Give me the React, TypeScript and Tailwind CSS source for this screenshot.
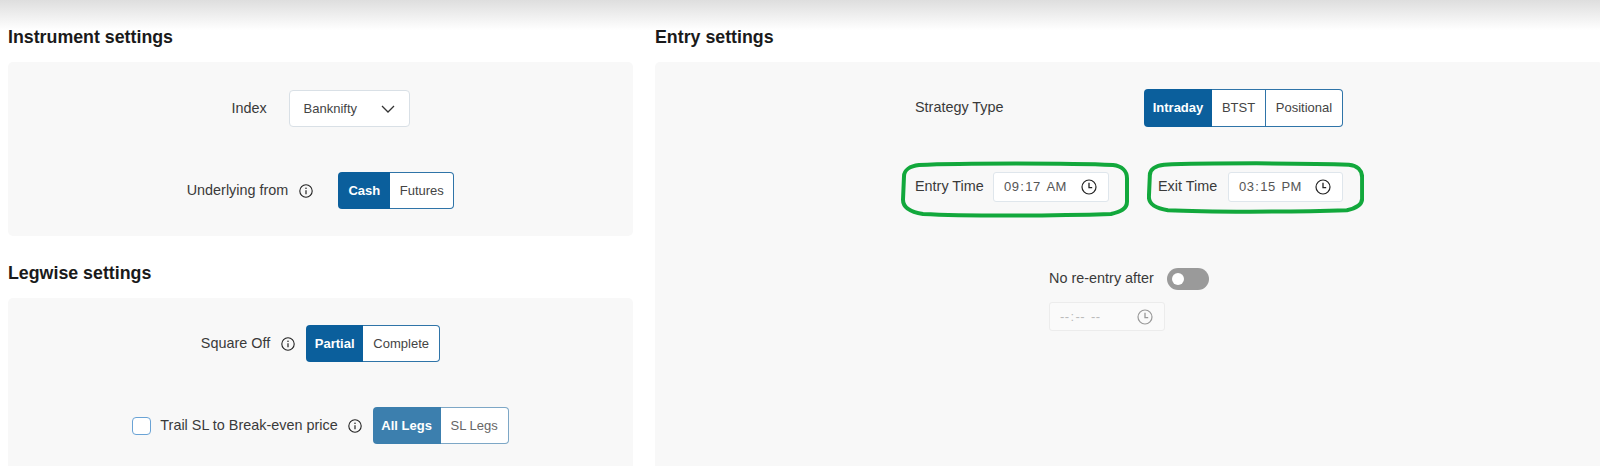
import React from "react";

const font = { fontFamily: '"Liberation Sans", Arial, sans-serif' };

function Info() {
  return (
    <svg width="14" height="14" viewBox="0 0 14 14" fill="none" className="shrink-0 text-[#222]">
      <circle cx="7" cy="7" r="6.2" stroke="currentColor" strokeWidth="1.1" />
      <path d="M7 6.2v4" stroke="currentColor" strokeWidth="1.2" />
      <circle cx="7" cy="4.2" r="0.8" fill="currentColor" />
    </svg>
  );
}

function Clock({ muted }: { muted?: boolean }) {
  return (
    <svg width="16" height="16" viewBox="0 0 16 16" fill="none" className={muted ? "text-[#999]" : "text-[#222]"}>
      <circle cx="8" cy="8" r="7" stroke="currentColor" strokeWidth="1.2" />
      <path d="M8 3.8V8.6h3.2" stroke="currentColor" strokeWidth="1.3" />
    </svg>
  );
}

type Opt = { label: string; w: string };

function Toggle({ options, light, h = "h-[37px]" }: { options: Opt[]; light?: boolean; h?: string }) {
  return (
    <div className={`flex ${h} shrink-0`}>
      {options.map((o, i) => {
        const active = i === 0;
        const last = i === options.length - 1;
        return (
          <div
            key={o.label}
            className={`flex items-center justify-center text-[13px] ${o.w} ${
              active
                ? light
                  ? "bg-[#3c7fae] font-bold text-white rounded-l-[4px]"
                  : "bg-[#0b5f9c] font-bold text-white rounded-l-[4px]"
                : light
                  ? "bg-white text-[#666] border border-l-0 border-[#7da7c6]"
                  : "bg-white text-[#444] border border-l-0 border-[#2f74a8]"
            } ${last ? "rounded-r-[4px]" : ""}`}
          >
            {o.label}
          </div>
        );
      })}
    </div>
  );
}

function TimeInput({ value, w, muted }: { value: [string, string, string]; w: string; muted?: boolean }) {
  return (
    <div
      className={`flex items-center justify-between pl-[10px] pr-[11px] ${w} ${muted ? "h-[29px] border-[#ececec] bg-[#fafafa] text-[#bbb]" : "h-[30px] border-[#dfe6ec] bg-white text-[#555]"} rounded-[3px] border`}
    >
      <span className="flex text-[13px] tracking-[0.4px]">
        <span>{value[0]}</span>
        <span className="mx-[1px]">:</span>
        <span>{value[1]}</span>
        <span className="ml-[6px]">{value[2]}</span>
      </span>
      <Clock muted={muted} />
    </div>
  );
}

function Ring({ className, path }: { className: string; path: string }) {
  return (
    <svg className={`pointer-events-none absolute ${className}`} viewBox="0 0 228 56" preserveAspectRatio="none" fill="none">
      <path d={path} stroke="#12a83c" strokeWidth="4" vectorEffect="non-scaling-stroke" />
    </svg>
  );
}

const ringPath =
  "M18 4 C60 2 170 2 212 4 C221 5 226 10 226 17 L226 40 C226 47 220 50 210 52 C150 54 60 54 22 52 C9 50 2 46 2 38 L3 15 C3 9 9 5 18 4 Z";

export default function App() {
  return (
    <div className="relative h-[466px] w-[1600px] overflow-hidden bg-white" style={font}>
      <div className="absolute inset-x-0 top-0 h-[30px] bg-gradient-to-b from-[#dedede] to-white" />
      <div className="relative flex gap-[22px] pl-[8px] pt-[25px]">
        <div className="w-[625px] shrink-0">
          <h2 className="mb-[13px] h-[24px] text-[17.8px] font-bold leading-[25px] text-[#1a1a1a]">Instrument settings</h2>
          <section className="flex h-[174px] flex-col items-center gap-[45px] rounded-[5px] bg-[#f8f8f8] pt-[28px] text-[14.4px] text-[#3a3a3a]">
            <div className="flex h-[37px] items-center gap-[22px]">
              <span>Index</span>
              <div className="flex h-[37px] w-[121px] items-center justify-between rounded-[4px] border border-[#d9e0e6] bg-white pl-[14px] pr-[14px] text-[13px] text-[#444]">
                <span>Banknifty</span>
                <svg width="14" height="8" viewBox="0 0 14 8" fill="none">
                  <path d="M1 1l6 6 6-6" stroke="#333" strokeWidth="1.3" />
                </svg>
              </div>
            </div>
            <div className="flex h-[37px] items-center">
              <span>Underlying from</span>
              <span className="ml-[11px] mr-[25px]"><Info /></span>
              <Toggle options={[{ label: "Cash", w: "w-[52px]" }, { label: "Futures", w: "w-[64px]" }]} />
            </div>
          </section>

          <h2 className="mb-[13px] mt-[25px] h-[24px] text-[17.8px] font-bold leading-[25px] text-[#1a1a1a]">Legwise settings</h2>
          <section className="flex h-[200px] flex-col items-center gap-[45px] rounded-[5px] bg-[#f8f8f8] pt-[27px] text-[14.4px] text-[#3a3a3a]">
            <div className="flex h-[37px] items-center">
              <span>Square Off</span>
              <span className="ml-[11px] mr-[11px]"><Info /></span>
              <Toggle options={[{ label: "Partial", w: "w-[57px]" }, { label: "Complete", w: "w-[77px]" }]} />
            </div>
            <div className="flex h-[37px] items-center">
              <span className="mr-[9px] block h-[18px] w-[19px] rounded-[4px] border border-[#6aa3d5] bg-white" />
              <span>Trail SL to Break-even price</span>
              <span className="ml-[10px] mr-[11px]"><Info /></span>
              <Toggle light options={[{ label: "All Legs", w: "w-[68px]" }, { label: "SL Legs", w: "w-[68px]" }]} />
            </div>
          </section>
        </div>

        <div className="w-[948px] shrink-0">
          <h2 className="mb-[13px] h-[24px] text-[17.8px] font-bold leading-[25px] text-[#1a1a1a]">Entry settings</h2>
          <section className="flex h-[420px] flex-col items-center rounded-[5px] bg-[#f8f8f8] pt-[27px] text-[14.4px] text-[#3a3a3a]">
            <div className="flex w-[428px] items-center justify-between">
              <span>Strategy Type</span>
              <Toggle
                h="h-[38px]"
                options={[
                  { label: "Intraday", w: "w-[68px]" },
                  { label: "BTST", w: "w-[54px]" },
                  { label: "Positional", w: "w-[77px]" },
                ]}
              />
            </div>
            <div className="mt-[45px] flex w-[428px] items-center">
              <div className="relative flex items-center gap-[8px]">
                <span className="w-[70px]">Entry Time</span>
                <TimeInput value={["09", "17", "AM"]} w="w-[116px]" />
                <Ring className="-left-[14px] -top-[11px] h-[57px] w-[228px]" path={ringPath} />
              </div>
              <div className="relative ml-[49px] flex items-center gap-[10px]">
                <span className="w-[60px]">Exit Time</span>
                <TimeInput value={["03", "15", "PM"]} w="w-[115px]" />
                <Ring className="-left-[11px] -top-[11px] h-[53px] w-[217px]" path={ringPath} />
              </div>
            </div>
            <div className="mt-[66px] flex h-[22px] items-center gap-[13px]">
              <span>No re-entry after</span>
              <span className="flex h-[22px] w-[42px] items-center rounded-full bg-[#9a9a9a] pl-[5px]">
                <span className="block h-[12px] w-[12px] rounded-full bg-white" />
              </span>
            </div>
            <div className="mr-[44px] mt-[12px]">
              <TimeInput muted value={["--", "--", "--"]} w="w-[116px]" />
            </div>
          </section>
        </div>
      </div>
    </div>
  );
}
